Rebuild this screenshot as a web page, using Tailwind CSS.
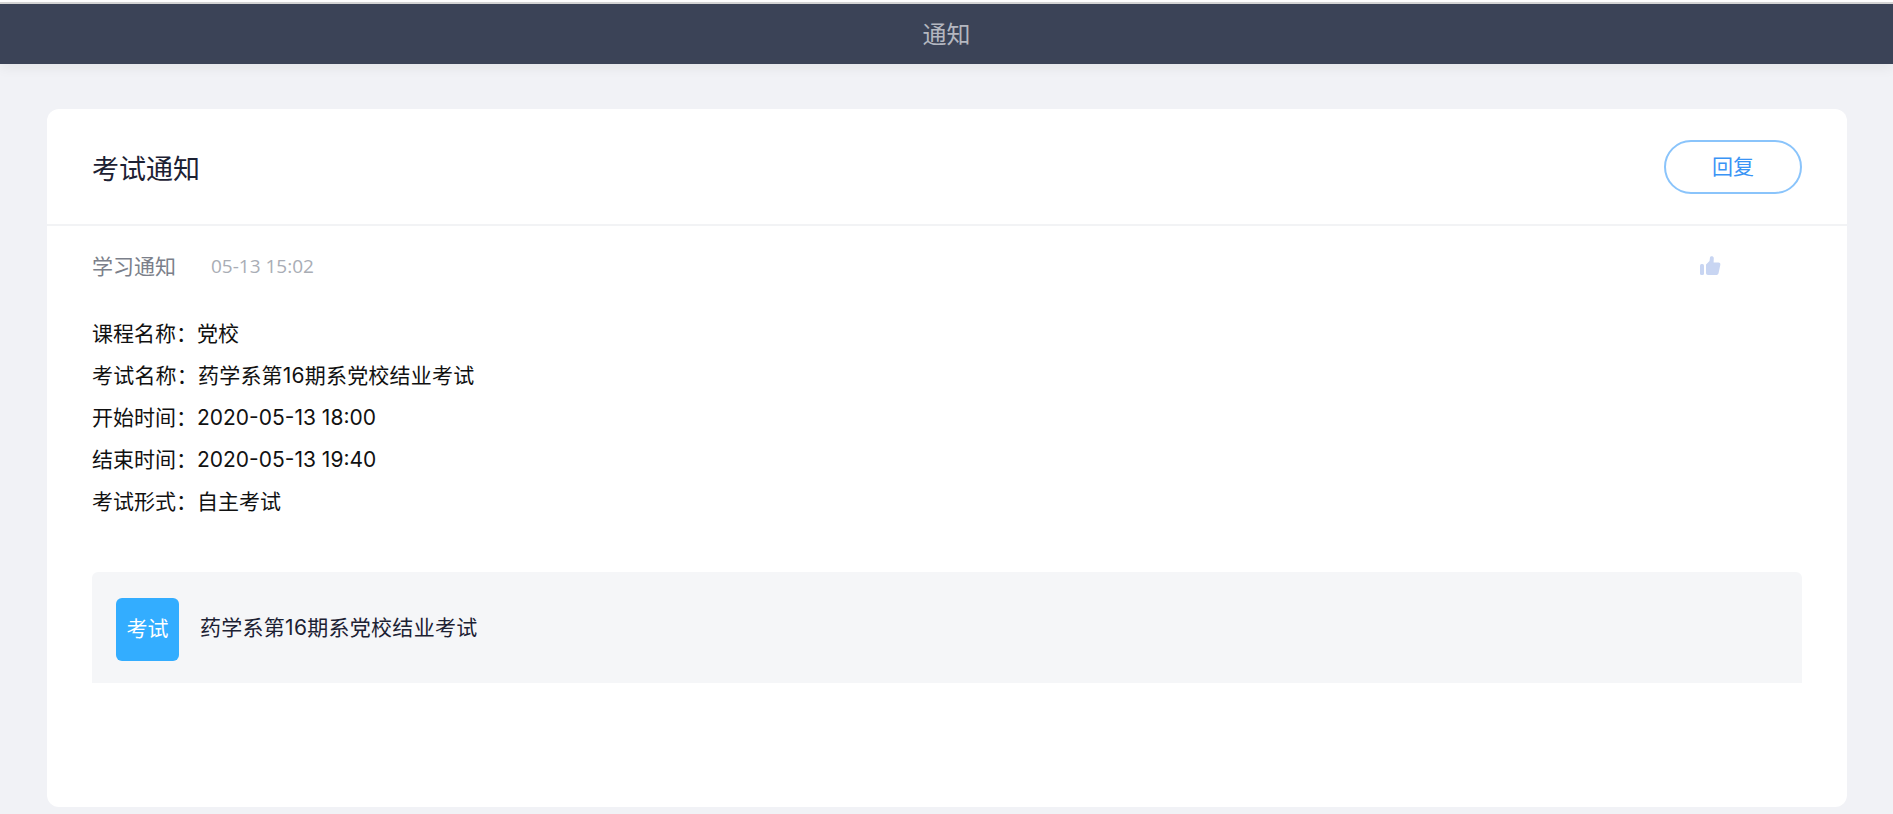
<!DOCTYPE html>
<html lang="zh-CN">
<head>
  <meta charset="UTF-8" />
  <meta name="viewport" content="width=device-width, initial-scale=1.0"/>
  <title>通知</title>
  <script src="https://cdn.jsdelivr.net/npm/@tailwindcss/browser@4"></script>
</head>
<body class="h-[814px] overflow-hidden bg-[#f1f2f6] font-['Inter','Noto_Sans_CJK_SC',sans-serif]">

  <!-- Top bar -->
  <div class="h-[4px] bg-[#d6d6d6] border-t-2 border-white"></div>
  <header class="h-[60px] pt-[2px] bg-[#3b4357] flex items-center justify-center text-[24px] text-[#b4b7c0] shadow-[0_4px_12px_rgba(0,0,0,0.06)]">通知</header>

  <!-- Card -->
  <main class="mt-[45px] ml-[47px] mr-[46px] h-[698px] bg-white rounded-[12px]">
    <div class="h-[117px] pl-[45px] pr-[45px] flex items-center justify-between border-b-2 border-[#f2f3f5]">
      <h1 class="mt-[7px] text-[27px] text-[#1c2133]">考试通知</h1>
      <button class="w-[138px] h-[54px] mt-[1px] rounded-full border-2 border-[#8ac4fb] text-[21px] text-[#3a94f5] bg-white">回复</button>
    </div>

    <div class="px-[45px]">
      <div class="h-[82px] flex items-center">
        <span class="text-[21px] text-[#7b7f8a]">学习通知</span>
        <span class="ml-[35px] mb-[2px] text-[19px] text-[#a9adb5] font-['Open_Sans',sans-serif]">05-13 15:02</span>
        <svg class="ml-auto mr-[81px] mb-[2px] w-[22px] h-[22px]" viewBox="0 0 22 22" fill="#c8d5f2">
          <rect x="1" y="9" width="4" height="11" rx="1.5"/>
          <path d="M7 9.5 L10.5 6 L11 2.5 C11.2 0.6 14.6 0.6 14.8 3 L14.6 7.5 L19.5 7.5 C21 7.5 21.6 8.8 21.3 10 L19.6 18 C19.3 19.4 18.3 20 17 20 L9 20 C7.8 20 7 19.2 7 18 Z"/>
        </svg>
      </div>

      <div class="mt-[5px] text-[21px] leading-[42px] text-[#111111]">
        <p>课程名称：党校</p>
        <p class="tracking-[0.2px]">考试名称：药学系第16期系党校结业考试</p>
        <p>开始时间：2020-05-13 18:00</p>
        <p>结束时间：2020-05-13 19:40</p>
        <p>考试形式：自主考试</p>
      </div>

      <div class="mt-[49px] h-[111px] bg-[#f5f6f8] rounded-t-[6px] pl-[24px] flex items-center">
        <div class="w-[63px] h-[63px] mt-[3px] rounded-[6px] bg-[#33adff] text-white text-[21px] flex items-center justify-center">考试</div>
        <span class="ml-[21px] text-[21px] text-[#1c2133] tracking-[0.28px]">药学系第16期系党校结业考试</span>
      </div>
    </div>
  </main>
</body>
</html>
